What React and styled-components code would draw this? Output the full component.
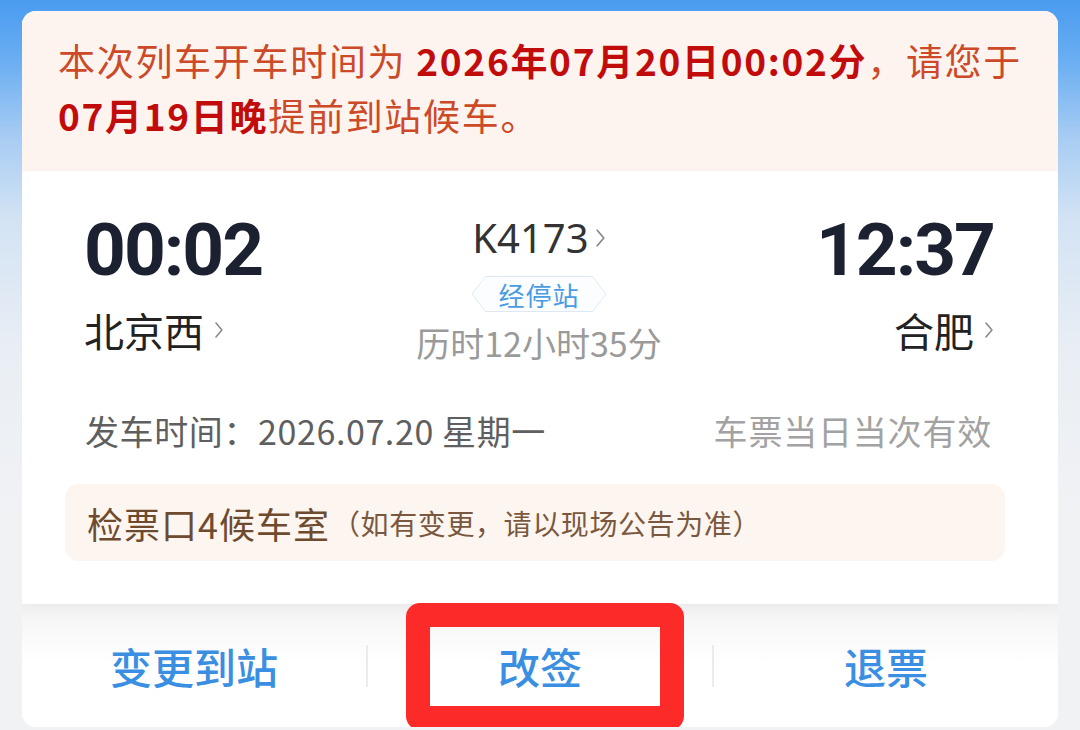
import React from 'react'
import styled, { createGlobalStyle } from 'styled-components'

const GlobalStyle = createGlobalStyle`
    html, body {
        margin: 0;
        padding: 0;
        height: 100%;
        overflow: hidden;
    }
    body {
        font-family: "Noto Sans CJK SC", "Noto Sans", sans-serif;
        background: linear-gradient(180deg, #4a9bf0 0px, #6aaef2 60px, #a9cdf3 140px, #d3e3f4 220px, #e9eef4 350px, #f1f2f4 520px);
    }
`

const Chevron = ({ size = 18, color = '#8a8a8a' }) => (
    <ChevronSvg width={size * 0.55} height={size} viewBox="0 0 10 18">
        <polyline points="2,2 8,9 2,16" fill="none" stroke={color} strokeWidth="1.6" strokeLinecap="round" strokeLinejoin="round" />
    </ChevronSvg>
)

const App = () => {
    return (
        <Page>
            <GlobalStyle />
            <Card>
                <Notice>
                    本次列车开车时间为 <Strong>2026年07月20日00:02分</Strong>，请您于
                    <br />
                    <Strong>07月19日晚</Strong>提前到站候车。
                </Notice>

                <Body>
                    <TrainGrid>
                        <Side>
                            <Time>00:02</Time>
                            <Station>北京西<Chevron size={18} /></Station>
                        </Side>

                        <Middle>
                            <TrainNo>K4173<Chevron size={20} /></TrainNo>
                            <Badge>
                                <BadgeInner>经停站</BadgeInner>
                            </Badge>
                            <Duration>历时12小时35分</Duration>
                        </Middle>

                        <Side $end>
                            <Time>12:37</Time>
                            <Station>合肥<Chevron size={18} /></Station>
                        </Side>
                    </TrainGrid>

                    <DateRow>
                        <span>发车时间：2026.07.20 星期一</span>
                        <Valid>车票当日当次有效</Valid>
                    </DateRow>

                    <GateBox>
                        <GateMain>检票口4候车室</GateMain>
                        <GateNote>（如有变更，请以现场公告为准）</GateNote>
                    </GateBox>
                </Body>

                <ActionBar>
                    <Action>变更到站</Action>
                    <Divider />
                    <Action>
                        改签
                        <Highlight />
                    </Action>
                    <Divider />
                    <Action>退票</Action>
                </ActionBar>
            </Card>
        </Page>
    )
}

const Page = styled.div`
    padding: 11px 22px 0 22px;
`

const Card = styled.section`
    background: #fff;
    border-radius: 14px;
    overflow: hidden;
`

const Notice = styled.div`
    background: #fdf4f0;
    padding: 22px 30px 28px 36px;
    font-size: 37px;
    line-height: 55px;
    letter-spacing: 1.7px;
    color: #cc4a28;
    white-space: nowrap;
`

const Strong = styled.b`
    font-weight: 700;
    color: #c20c0c;
`

const Body = styled.div`
    background: #fff;
    padding: 39px 0 43px;
    box-shadow: 0 4px 12px rgba(0, 0, 0, 0.04);
    position: relative;
`

const TrainGrid = styled.div`
    display: grid;
    grid-template-columns: 1fr auto 1fr;
    padding: 0 64px 0 62px;
    color: #1c2231;
`

const Side = styled.div`
    display: flex;
    flex-direction: column;
    align-items: ${(p) => (p.$end ? 'flex-end' : 'flex-start')};
`

const Time = styled.div`
    font-family: Roboto, "Noto Sans", sans-serif;
    font-weight: 700;
    font-size: 73px;
    line-height: 80px;
    letter-spacing: -2px;
    color: #1b2130;
`

const Station = styled.div`
    display: flex;
    align-items: center;
    gap: 10px;
    margin-top: 16px;
    font-size: 40px;
    line-height: 48px;
    color: #222;
`

const ChevronSvg = styled.svg`
    display: block;
    flex-shrink: 0;
`

const Middle = styled.div`
    display: flex;
    flex-direction: column;
    align-items: center;
`

const TrainNo = styled.div`
    display: flex;
    align-items: center;
    gap: 6px;
    margin-top: 6px;
    font-family: "Noto Sans", sans-serif;
    font-size: 40px;
    line-height: 44px;
    color: #333;
`

const Badge = styled.div`
    margin-top: 16px;
    padding: 1px;
    height: 36px;
    box-sizing: border-box;
    background: #dce8f4;
    clip-path: polygon(14px 0, calc(100% - 14px) 0, 100% 50%, calc(100% - 14px) 100%, 14px 100%, 0 50%);
`

const BadgeInner = styled.div`
    height: 34px;
    padding: 0 26px;
    display: flex;
    align-items: center;
    background: #fbfdff;
    clip-path: polygon(13px 0, calc(100% - 13px) 0, 100% 50%, calc(100% - 13px) 100%, 13px 100%, 0 50%);
    font-size: 26px;
    letter-spacing: 1px;
    color: #4a9ce2;
`

const Duration = styled.div`
    margin-top: 11px;
    font-size: 34px;
    line-height: 40px;
    color: #9a9a9a;
`

const DateRow = styled.div`
    display: flex;
    justify-content: space-between;
    align-items: center;
    margin-top: 46px;
    padding: 0 66px 0 63px;
    font-size: 34px;
    line-height: 44px;
    letter-spacing: 0.6px;
    color: #5f5f5f;
`

const Valid = styled.span`
    font-size: 34px;
    letter-spacing: 0.8px;
    color: #a2a2a2;
`

const GateBox = styled.div`
    display: flex;
    align-items: center;
    height: 77px;
    margin: 31px 53px 0 43px;
    padding: 0 22px;
    border-radius: 14px;
    background: #fdf5ef;
    color: #6e4b2e;
`

const GateMain = styled.span`
    font-size: 36px;
    letter-spacing: 1px;
`

const GateNote = styled.span`
    margin-left: 2px;
    font-size: 28px;
    letter-spacing: 0.6px;
    color: #7a5840;
`

const ActionBar = styled.div`
    display: flex;
    align-items: center;
    height: 123px;
    background: linear-gradient(180deg, #f2f2f2 0px, #f9f9f9 30px, #fff 60px);
`

const Action = styled.div`
    position: relative;
    flex: 1;
    height: 100%;
    display: flex;
    align-items: center;
    justify-content: center;
    font-size: 42px;
    font-weight: 500;
    color: #3b8fe2;
`

const Divider = styled.div`
    width: 2px;
    height: 42px;
    background: #ececec;
`

const Highlight = styled.div`
    position: absolute;
    top: -1px;
    left: 38px;
    right: 28px;
    bottom: -3px;
    border: 24px solid #fd2a2a;
    border-radius: 14px;
`

export default App
